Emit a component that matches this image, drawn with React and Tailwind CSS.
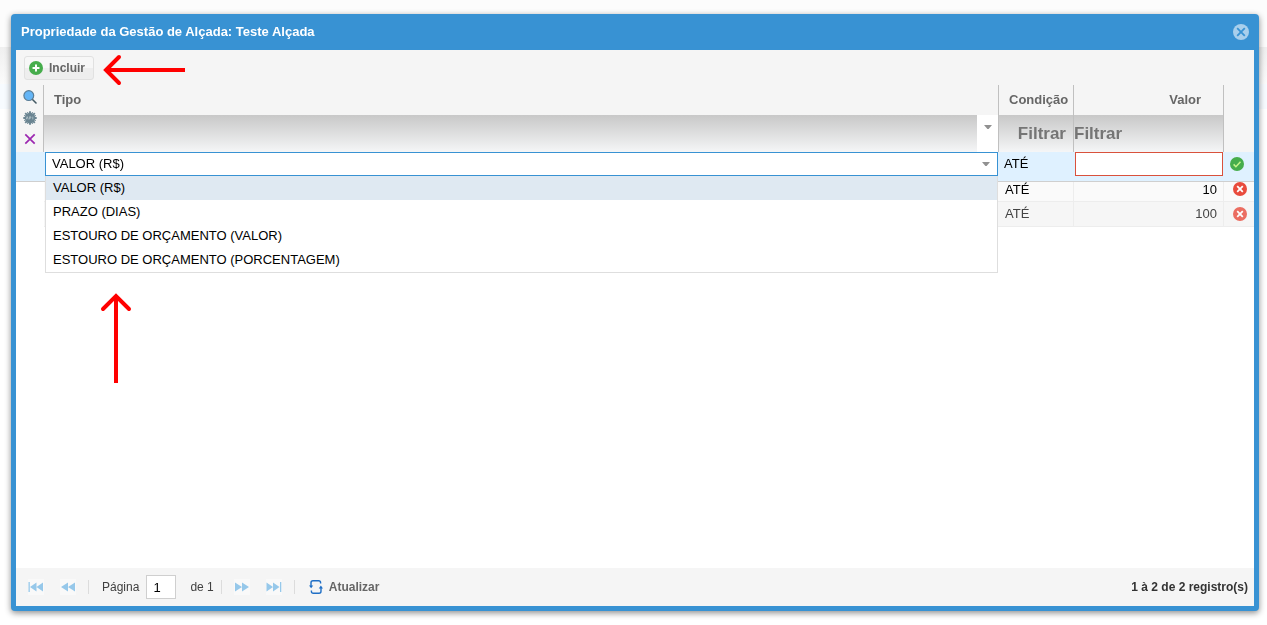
import { useState } from 'react'

const TYPES = [
  'VALOR (R$)',
  'PRAZO (DIAS)',
  'ESTOURO DE ORÇAMENTO (VALOR)',
  'ESTOURO DE ORÇAMENTO (PORCENTAGEM)',
]

function AddIcon() {
  return (
    <svg width="14" height="14" viewBox="0 0 14 14" aria-hidden="true">
      <circle cx="7" cy="7" r="7" fill="#46ad4c" />
      <path d="M7 4.3v5.4M4.3 7h5.4" stroke="#fff" strokeWidth="2" strokeLinecap="round" />
    </svg>
  )
}

function CloseIcon() {
  return (
    <svg width="16" height="16" viewBox="0 0 16 16" aria-hidden="true">
      <circle cx="8" cy="8" r="8" fill="#a8cfec" />
      <path d="M4.2 4.2l7.6 7.6M11.8 4.2l-7.6 7.6" stroke="#3892d3" strokeWidth="1.8" />
    </svg>
  )
}

function SearchIcon() {
  return (
    <svg width="14" height="14" viewBox="0 0 14 14" aria-hidden="true">
      <path d="M9 9l4 4" stroke="#455a64" strokeWidth="1.6" strokeLinecap="round" />
      <circle cx="5.8" cy="5.6" r="4.9" fill="#64b5f6" stroke="#5a7d96" strokeWidth="1.2" />
    </svg>
  )
}

function GearIcon() {
  return (
    <svg width="14" height="14" viewBox="0 0 14 14" aria-hidden="true">
      <circle cx="7" cy="7" r="5.2" fill="#6b8592" />
      <g stroke="#6b8592" strokeWidth="1.9">
        <path d="M7 0.3v13.4M0.3 7h13.4" />
        <path d="M2.2 2.2l9.6 9.6M11.8 2.2l-9.6 9.6" />
        <path d="M4.5 1l5 12M9.5 1l-5 12M1 4.5l12 5M1 9.5l12-5" strokeWidth="1" />
      </g>
      <path
        d="M3.2 8.4l1-2.8 1 2.8M6.4 8.4V5.8h1.4v1.3H6.6M9.8 5.6v2.8"
        fill="none" stroke="#b7c6cd" strokeWidth="0.8"
      />
    </svg>
  )
}

function ClearIcon() {
  return (
    <svg width="14" height="14" viewBox="0 0 14 14" aria-hidden="true">
      <path d="M2.3 2.3l9.4 9.4M11.7 2.3l-9.4 9.4" stroke="#9c27b0" strokeWidth="1.7" />
    </svg>
  )
}

function ConfirmIcon() {
  return (
    <svg width="14" height="14" viewBox="0 0 14 14" aria-hidden="true">
      <circle cx="7" cy="7" r="7" fill="#46ad4c" />
      <path d="M3.6 7.4l2.3 2.3 4.6-5" fill="none" stroke="#c5f58a" strokeWidth="1.5" />
    </svg>
  )
}

function RemoveIcon() {
  return (
    <svg width="14" height="14" viewBox="0 0 14 14" aria-hidden="true">
      <circle cx="7" cy="7" r="7" fill="#e94b3c" />
      <path d="M4.2 4.2l5.6 5.6M9.8 4.2l-5.6 5.6" stroke="#fff" strokeWidth="1.8" />
    </svg>
  )
}

function RefreshIcon() {
  return (
    <svg width="14" height="16" viewBox="0 0 14 16" aria-hidden="true">
      <g fill="none" stroke="#1f6fc6" strokeWidth="1.4">
        <path d="M2 7V3.8Q2 1.8 4 1.8H9.6Q11.6 1.8 11.6 3.8V4.6" />
        <path d="M12 9v3.2Q12 14.2 10 14.2H4.4Q2.4 14.2 2.4 12.2V11.4" />
      </g>
      <path d="M0 6.4h4.2L2.1 9.2zM9.8 9.4h4.2L11.9 6.6z" fill="#1f6fc6" />
    </svg>
  )
}

function Caret() {
  return (
    <svg width="8" height="4" viewBox="0 0 8 4" aria-hidden="true">
      <path d="M0 0h8L4.6 4H3.4z" fill="#919191" />
    </svg>
  )
}

// Arrow shapes inside a 16px box, one per paging direction
const PAGE_PATHS = {
  first: 'M0.5 3h1.3v10H0.5zM8.5 3.5v9L2 8zM15 3.5v9L8.5 8z',
  prev: 'M8 3.5v9L1 8zM15 3.5v9L8 8z',
  next: 'M1 3.5v9L8 8zM8 3.5v9L15 8z',
  last: 'M14 3h1.3v10H14zM0.5 3.5v9L7 8zM7 3.5v9L13.5 8z',
}

function PageButton({ kind, label }) {
  return (
    <button type="button" aria-label={label} className="bg-[#f9f9f9]">
      <svg width="16" height="16" viewBox="0 0 16 16" aria-hidden="true" className="block">
        <path d={PAGE_PATHS[kind]} fill="#96c8ea" />
      </svg>
    </button>
  )
}

function Separator() {
  return <span className="h-3.5 w-px bg-[#dcdcdc]" />
}

function DataRow({ value, faded }) {
  return (
    <tr className={faded ? 'h-[25px] bg-[#f6f6f6] text-[#444]' : 'h-5 bg-[#fafafa] align-top text-black'}>
      <td className="bg-white" />
      <td className="border-b border-[#ededed]" />
      <td className="border-r border-b border-[#ededed] pl-1.5 leading-4">ATÉ</td>
      <td className="border-r border-b border-[#ededed] pr-1.5 text-right leading-4">{value}</td>
      <td className="border-b border-[#ededed]">
        <button type="button" aria-label="Excluir" className={faded ? 'ml-[9px] block opacity-80' : 'ml-[9px] block'}>
          <RemoveIcon />
        </button>
      </td>
    </tr>
  )
}

function TypeEditor() {
  const [type, setType] = useState(TYPES[0])

  return (
    <div className="relative mx-px">
      <select
        aria-label="Tipo"
        value={type}
        onChange={(e) => setType(e.target.value)}
        className="block h-6 w-full appearance-none border border-solid border-[#3892d3] bg-white pl-1.5 outline-none"
      >
        {TYPES.map((t) => <option key={t}>{t}</option>)}
      </select>
      <span className="pointer-events-none absolute top-2.5 right-2"><Caret /></span>

      {/* Open option list */}
      <ul role="listbox" aria-label="Tipos" className="absolute top-6 left-0 z-10 w-full border border-t-0 border-[#dedede] bg-white">
        {TYPES.map((t) => (
          <li
            key={t}
            role="option"
            aria-selected={t === type}
            onClick={() => setType(t)}
            className="h-6 cursor-pointer px-[7px] leading-6 aria-selected:bg-[#dfe9f2]"
          >
            {t}
          </li>
        ))}
      </ul>
    </div>
  )
}

function Grid() {
  return (
    <table className="w-full table-fixed border-separate border-spacing-0 text-[13px]">
      <colgroup>
        <col className="w-7" />
        <col />
        <col className="w-[75px]" />
        <col className="w-[150px]" />
        <col className="w-[30px]" />
      </colgroup>
      <thead className="bg-[#f5f5f5] text-left text-[#666]">
        <tr className="h-[30px]">
          <td rowSpan={2} className="border-r border-[#c0c0c0] align-top">
            <div className="flex flex-col items-center gap-[7px] pt-[5px]">
              <button type="button" aria-label="Pesquisar" className="block"><SearchIcon /></button>
              <button type="button" aria-label="Configurar" className="block"><GearIcon /></button>
              <button type="button" aria-label="Limpar" className="block"><ClearIcon /></button>
            </div>
          </td>
          <th className="border-r border-[#c0c0c0] pl-2.5">Tipo</th>
          <th className="border-r border-[#c0c0c0] pl-2.5">Condição</th>
          <th className="border-r border-[#c0c0c0] pr-[22px] text-right">Valor</th>
          <td rowSpan={2} />
        </tr>
        <tr className="h-[37px] bg-linear-to-b from-[#c8c8c8] to-[#f5f6f7]">
          <td className="border-r border-[#c0c0c0]">
            <div className="relative h-[37px] border-r-[21px] border-white">
              <select aria-label="Filtrar tipo" className="block h-full w-full appearance-none outline-none" />
              <span className="pointer-events-none absolute top-2.5 -right-[15px]"><Caret /></span>
            </div>
          </td>
          <td className="border-r border-[#c0c0c0]">
            <input
              aria-label="Filtrar condição"
              placeholder="Filtrar"
              className="block h-[37px] w-full pr-[7px] text-right text-[17px] font-bold outline-none placeholder:text-[#757575]"
            />
          </td>
          <td className="border-r border-[#c0c0c0]">
            <input
              aria-label="Filtrar valor"
              placeholder="Filtrar"
              className="block h-[37px] w-full text-[17px] font-bold outline-none placeholder:text-[#757575]"
            />
          </td>
        </tr>
      </thead>
      <tbody>
        <tr className="h-[30px] bg-[#dff1ff] align-top text-black">
          <td className="border-b border-[#cfcfcf]" />
          <td className="border-b border-[#cfcfcf]"><TypeEditor /></td>
          <td className="border-b border-[#cfcfcf] pl-[5px] leading-6">ATÉ</td>
          <td className="border-b border-[#cfcfcf] px-px">
            <input aria-label="Valor" className="block h-6 w-full border border-solid border-[#d9513c] bg-white px-1.5 text-right outline-none" />
          </td>
          <td className="border-b border-[#cfcfcf]">
            <button type="button" aria-label="Confirmar" className="mt-[5px] ml-1.5 block"><ConfirmIcon /></button>
          </td>
        </tr>
        <DataRow value="10" />
        <DataRow value="100" faded />
      </tbody>
    </table>
  )
}

function Pager() {
  return (
    <footer className="flex h-[38px] items-center bg-[#f5f5f5] pr-1.5 pl-3 text-xs text-[#404040]">
      <div className="flex items-center gap-4">
        <PageButton kind="first" label="Primeira página" />
        <PageButton kind="prev" label="Página anterior" />
      </div>
      <div className="ml-3 flex items-center gap-[7px]">
        <Separator />
        <label htmlFor="page" className="pl-1.5">Página</label>
        <input
          id="page"
          defaultValue="1"
          className="h-6 w-[30px] border border-[#cfcfcf] bg-white pl-1.5 text-[13px] text-black outline-none"
        />
        <span className="pl-[7px]">de 1</span>
        <Separator />
      </div>
      <div className="ml-3 flex items-center gap-4">
        <PageButton kind="next" label="Próxima página" />
        <PageButton kind="last" label="Última página" />
      </div>
      <div className="ml-3 flex items-center gap-3.5">
        <Separator />
        <button type="button" className="flex items-center gap-1.5 font-bold text-[#666]">
          <RefreshIcon />
          Atualizar
        </button>
      </div>
      <p className="ml-auto font-bold text-[#333]">1 à 2 de 2 registro(s)</p>
    </footer>
  )
}

function App() {
  return (
    <div className="min-h-screen bg-white font-['Liberation_Sans',Arial,sans-serif]">

      {/* Dimmed page behind the window */}
      <div className="h-[47px] bg-[#fcfcfc]" />
      <div className="h-[37px] bg-linear-to-b from-[#efefef] to-[#fbfbfb]" />
      <div className="h-[25px] bg-[#f7fbff]" />

      <div className="fixed inset-0 flex pt-3.5 pr-2 pb-3.5 pl-[11px]">
        <section
          role="dialog"
          aria-labelledby="window-title"
          className="relative flex flex-1 flex-col rounded-[4px] bg-[#3892d3] px-[5px] pb-[5px] shadow-[0_2px_6px_rgba(0,0,0,0.45)]"
        >
          <header className="flex h-9 items-center justify-between px-[5px]">
            <h1 id="window-title" className="text-[13px] font-bold text-white">
              Propriedade da Gestão de Alçada: Teste Alçada
            </h1>
            <button type="button" aria-label="Fechar"><CloseIcon /></button>
          </header>

          <div className="flex h-[35px] items-center bg-[#f5f5f5] px-2">
            <button
              type="button"
              className="flex h-6 items-center gap-1.5 rounded-[3px] border border-[#e1e1e1] bg-linear-to-b from-[#f7f7f7] from-50% to-[#eeeeee] to-50% px-1 text-xs font-bold text-[#666]"
            >
              <AddIcon />
              <span className="pr-1">Incluir</span>
            </button>
          </div>

          <div className="flex-1 bg-white">
            <Grid />
          </div>

          <Pager />

          {/* Red pointers drawn over the window */}
          <svg className="pointer-events-none absolute top-10 left-[91px] z-20" width="84" height="32" viewBox="0 0 84 32" fill="none" stroke="#f00" strokeWidth="4" aria-hidden="true">
            <path d="M4 16h79" />
            <path d="M17 3L4 16l13 13" strokeLinecap="round" />
          </svg>
          <svg className="pointer-events-none absolute top-[278px] left-[89px] z-20" width="32" height="92" viewBox="0 0 32 92" fill="none" stroke="#f00" strokeWidth="4" aria-hidden="true">
            <path d="M16 4v87" />
            <path d="M3 17L16 4l13 13" strokeLinecap="round" />
          </svg>
        </section>
      </div>
    </div>
  )
}

export default App
